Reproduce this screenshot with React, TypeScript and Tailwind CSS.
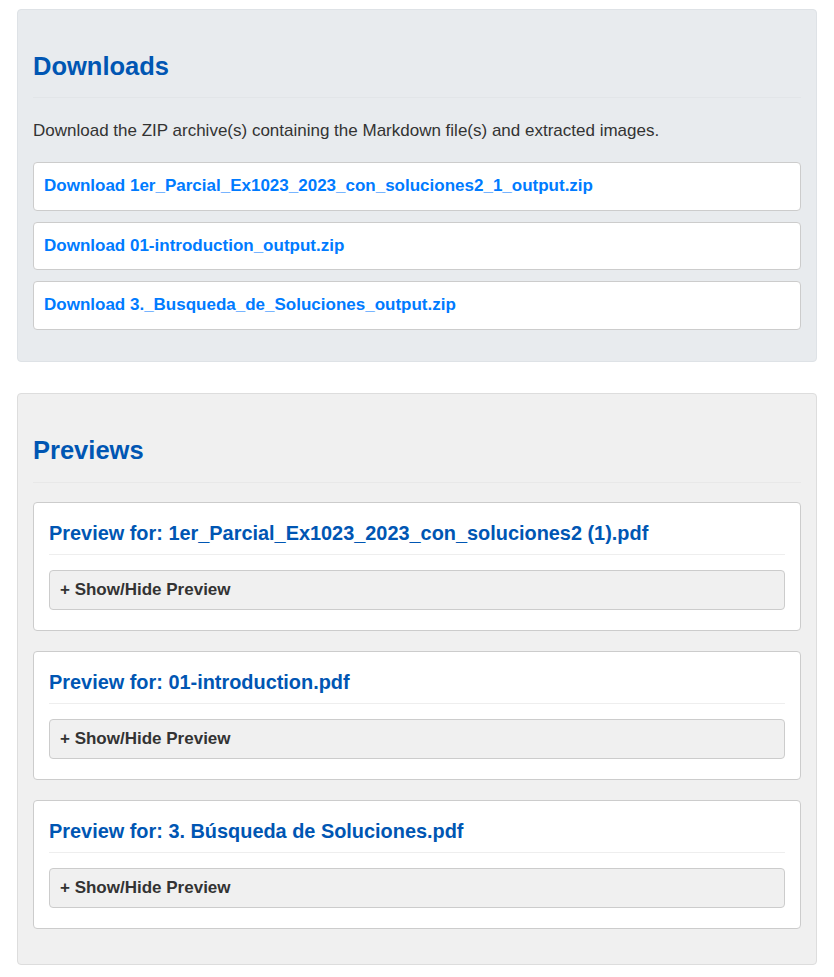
import React from "react";

const downloads = [
  "1er_Parcial_Ex1023_2023_con_soluciones2_1_output.zip",
  "01-introduction_output.zip",
  "3._Busqueda_de_Soluciones_output.zip",
];

const previews = [
  "1er_Parcial_Ex1023_2023_con_soluciones2 (1).pdf",
  "01-introduction.pdf",
  "3. Búsqueda de Soluciones.pdf",
];

const PreviewCard: React.FC<{ name: string }> = ({ name }) => (
  <div className="bg-white border border-[#cccccc] rounded-[4px] px-[15px] pt-[18px] pb-[20px]">
    <h3 className="text-[19.9px] leading-[24px] font-bold text-[#0056b3] pb-[9px] border-b border-[#eeeeee]">
      Preview for: {name}
    </h3>
    <button className="mt-[15px] w-full text-left h-[40px] px-[10px] bg-[#f0f0f0] border border-[#cccccc] rounded-[4px] text-[17px] font-bold text-[#333333]">
      + Show/Hide Preview
    </button>
  </div>
);

export default function App() {
  return (
    <div
      className="min-h-screen bg-white px-[17px] pt-[9px] text-[#333333] text-[17px]"
      style={{ fontFamily: '"Liberation Sans", Arial, sans-serif' }}
    >
      {/* Downloads */}
      <section className="bg-[#e8ebee] border border-[#dee2e6] rounded-[4px] px-[15px] pt-[42px] pb-[31px]">
        <h2 className="text-[25.5px] leading-[29px] font-bold text-[#0056b3] pb-[16px] border-b border-[#e2e5e8]">
          Downloads
        </h2>
        <p className="mt-[23px] leading-[20px]">
          Download the ZIP archive(s) containing the Markdown file(s) and extracted images.
        </p>
        <div className="mt-[21px] flex flex-col gap-[11px]">
          {downloads.map((d) => (
            <a
              key={d}
              href="#"
              className="block bg-white border border-[#cccccc] rounded-[4px] px-[10px] h-[48.5px] leading-[46px] font-bold text-[#007bff]"
            >
              Download {d}
            </a>
          ))}
        </div>
      </section>

      {/* Previews */}
      <section className="mt-[31px] bg-[#f0f0f0] border border-[#dddddd] rounded-[4px] px-[15px] pt-[42px] pb-[35px]">
        <h2 className="text-[25.5px] leading-[29px] font-bold text-[#0056b3] pb-[17px] border-b border-[#e8e8e8]">
          Previews
        </h2>
        <div className="mt-[19px] flex flex-col gap-[20px]">
          {previews.map((p) => (
            <PreviewCard key={p} name={p} />
          ))}
        </div>
      </section>
    </div>
  );
}
